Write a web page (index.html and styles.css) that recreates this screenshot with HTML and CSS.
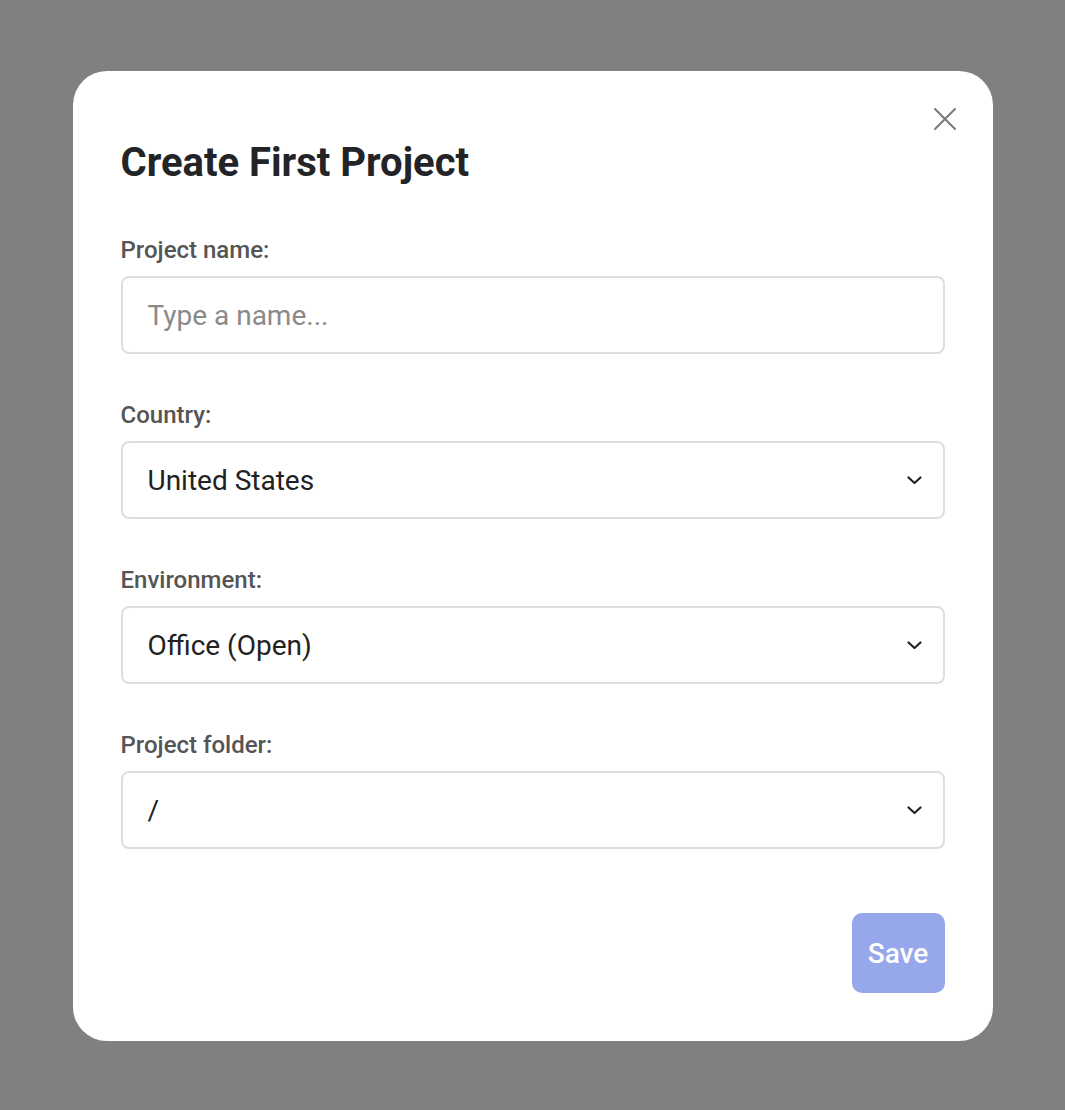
FILE: index.html
```html
<!DOCTYPE html>
<html lang="en">
<head>
<meta charset="utf-8">
<title>Create First Project</title>
<link rel="stylesheet" href="styles.css">
</head>
<body>
<div class="overlay">
  <div class="modal">
    <button class="close" aria-label="Close">
      <svg width="22" height="22" viewBox="0 0 22 22"><path d="M1 1L21 21M21 1L1 21" stroke="#7a7a7a" stroke-width="2" stroke-linecap="round" fill="none"/></svg>
    </button>
    <h1 class="title">Create First Project</h1>
    <div class="fields">
      <div class="field">
        <label class="label">Project name:</label>
        <div class="control"><span class="placeholder">Type a name...</span></div>
      </div>
      <div class="field">
        <label class="label">Country:</label>
        <div class="control select"><span class="value">United States</span>
          <svg class="chev" width="15" height="9" viewBox="0 0 15 9"><path d="M1.5 1.5L7.5 7L13.5 1.5" stroke="#222" stroke-width="2.2" fill="none" stroke-linecap="round" stroke-linejoin="round"/></svg>
        </div>
      </div>
      <div class="field">
        <label class="label">Environment:</label>
        <div class="control select"><span class="value">Office (Open)</span>
          <svg class="chev" width="15" height="9" viewBox="0 0 15 9"><path d="M1.5 1.5L7.5 7L13.5 1.5" stroke="#222" stroke-width="2.2" fill="none" stroke-linecap="round" stroke-linejoin="round"/></svg>
        </div>
      </div>
      <div class="field">
        <label class="label">Project folder:</label>
        <div class="control select"><span class="value">/</span>
          <svg class="chev" width="15" height="9" viewBox="0 0 15 9"><path d="M1.5 1.5L7.5 7L13.5 1.5" stroke="#222" stroke-width="2.2" fill="none" stroke-linecap="round" stroke-linejoin="round"/></svg>
        </div>
      </div>
    </div>
    <div class="footer">
      <button class="save">Save</button>
    </div>
  </div>
</div>
</body>
</html>
```
FILE: styles.css
```css
* { box-sizing: border-box; }
html, body { margin: 0; padding: 0; }
body {
  background: #808080;
  font-family: Roboto, "Liberation Sans", sans-serif;
  width: 1065px;
  height: 1110px;
}
.overlay {
  height: 1110px;
  display: flex;
  align-items: flex-start;
  justify-content: center;
  padding-top: 71px;
}
.modal {
  position: relative;
  width: 920px;
  height: 970px;
  background: #fff;
  border-radius: 34px;
  padding: 48px;
  display: flex;
  flex-direction: column;
}
.close {
  position: absolute;
  top: 37px;
  right: 37px;
  width: 22px;
  height: 22px;
  padding: 0;
  border: 0;
  background: none;
  display: block;
}
.close svg { display: block; }
.title {
  margin: 20px 0 0 0;
  font-size: 40px;
  line-height: 48px;
  font-weight: 700;
  color: #222427;
}
.fields {
  margin-top: 49px;
  display: flex;
  flex-direction: column;
  gap: 47px;
}
.field {
  display: flex;
  flex-direction: column;
}
.label {
  font-size: 24px;
  line-height: 28px;
  font-weight: 500;
  color: #555;
  margin-bottom: 12px;
}
.control {
  height: 78px;
  border: 2px solid #dedede;
  border-radius: 8px;
  display: flex;
  align-items: center;
  padding: 0 21px 0 25px;
  font-size: 28px;
}
.placeholder { color: #8a8a8a; }
.value { color: #222; flex: 1; }
.chev { display: block; }
.footer {
  margin-top: auto;
  display: flex;
  justify-content: flex-end;
}
.save {
  width: 93px;
  height: 80px;
  border: 0;
  border-radius: 10px;
  background: #97a7ec;
  color: #fff;
  font-family: Roboto, "Liberation Sans", sans-serif;
  font-size: 28px;
  font-weight: 500;
  padding: 0;
}
```
